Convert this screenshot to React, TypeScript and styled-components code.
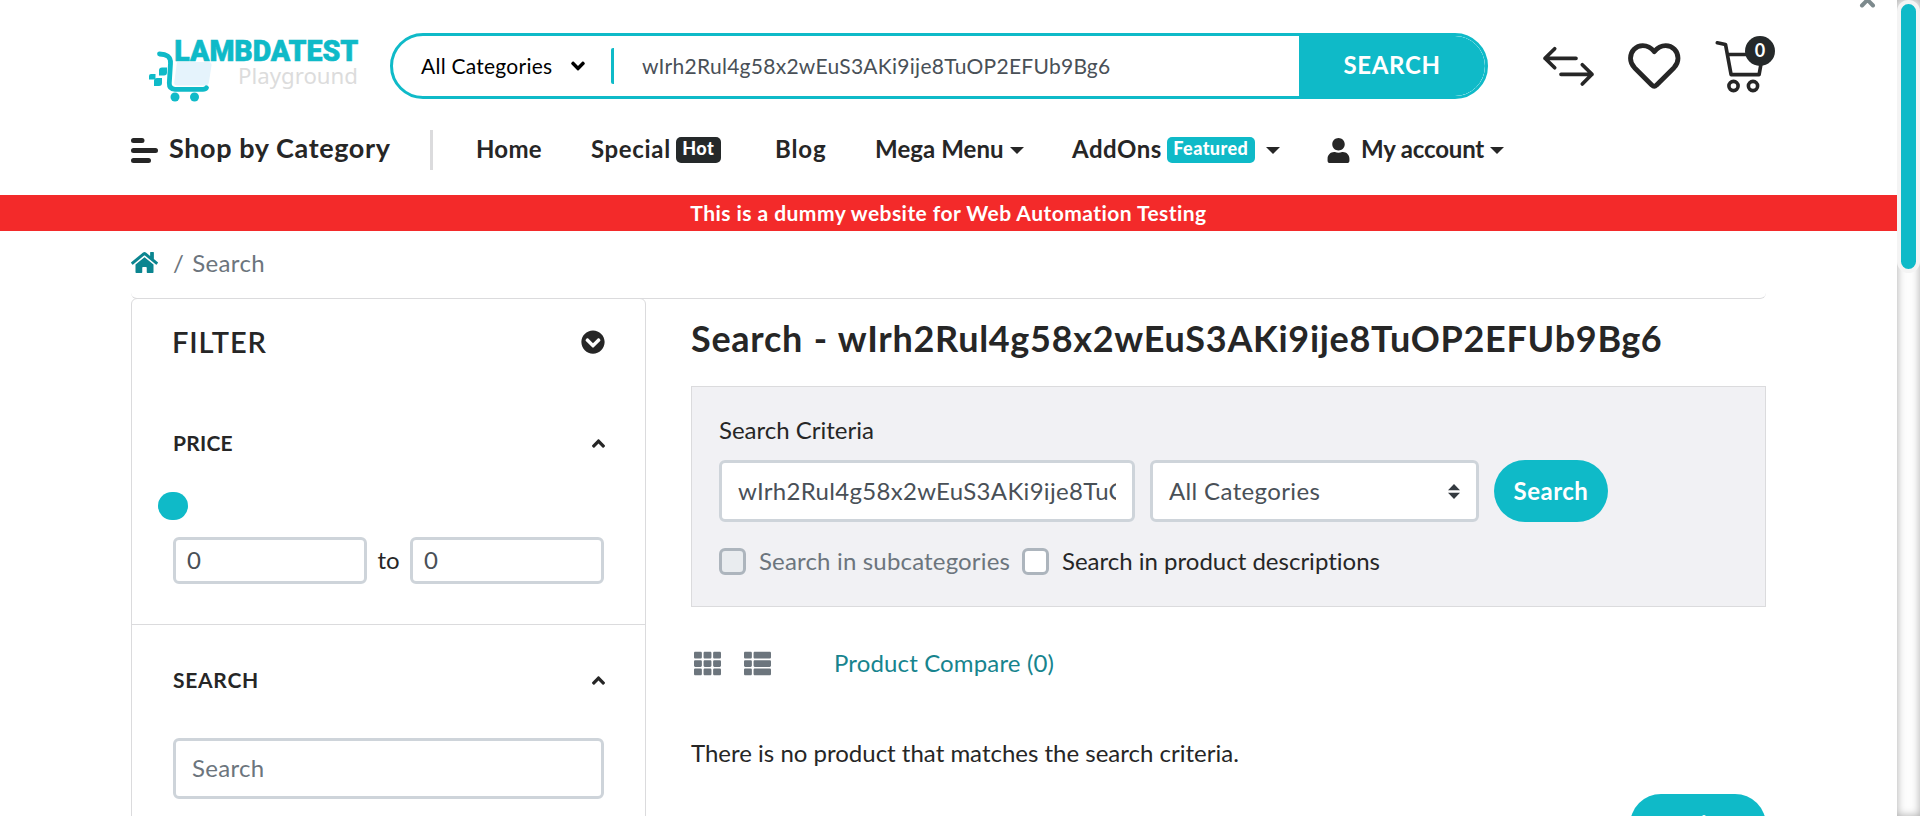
import React from 'react';
import styled, { createGlobalStyle } from 'styled-components';
import { FaAngleDown, FaAngleUp, FaChevronCircleDown, FaHome, FaTh, FaThList, FaUser } from 'react-icons/fa';

const teal = '#0fbac8';
const ink = '#262626';
const line = '#dbdbdd';
const query = 'wIrh2Rul4g58x2wEuS3AKi9ije8TuOP2EFUb9Bg6';

const GlobalStyle = createGlobalStyle`
  *, *::before, *::after { box-sizing: border-box; }
  body { margin: 0; background: #fff; overflow: hidden; font-variant-ligatures: none; }
  body, input, button { font-family: Lato, "Liberation Sans", sans-serif; font-size: 24px; color: ${ink}; }
  svg { display: block; flex: none; }
`;

const Window = styled.div`
  display: flex;
  width: 1920px;
  height: 816px;
  overflow: hidden;
  position: relative;
`;
const Main = styled.main`
  width: 1897px;
`;
const ScrollTrack = styled.div`
  width: 23px;
  height: 816px;
  background: #fdfdfd;
  box-shadow: inset 0 0 9px #aaa;
`;
const ScrollThumb = styled.div`
  width: 23px;
  height: 273px;
  border: 4px solid #f4f4f4;
  border-radius: 12px;
  background: ${teal};
`;
const PanelCaret = styled.svg`
  position: absolute;
  top: 0;
  left: 1858px;
`;

const TopRow = styled.div`
  display: flex;
  align-items: center;
  height: 130px;
  padding: 2px 0 0 148px;
`;
const LogoArt = styled.svg`
  margin-top: 6px;
`;
const SearchBar = styled.form`
  display: flex;
  width: 1098px;
  height: 66px;
  margin-left: 30px;
  border: 3px solid ${teal};
  border-radius: 33px;
  overflow: hidden;
`;
const CategoryPicker = styled.div`
  display: flex;
  align-items: center;
  justify-content: space-between;
  width: 218px;
  padding: 0 22px 0 28px;
  font-size: 21px;
  letter-spacing: 0.25px;
  color: #000;
  span { padding-bottom: 2px; }
`;
const Field = styled.input<{ $h: number; $w?: number; $pad: number }>`
  width: ${p => (p.$w ? p.$w + 'px' : '100%')};
  height: ${p => p.$h}px;
  padding: 0 ${p => p.$pad}px 2px;
  border: 3px solid #ced4da;
  border-radius: 6px;
  background: #fff;
  color: #495057;
  letter-spacing: 0.3px;
  outline: none;
  display: block;
  &::placeholder { color: #6c757d; opacity: 1; }
`;
const BarDivider = styled.i`
  width: 3px;
  height: 36px;
  margin-top: 12px;
  background: ${teal};
  border-radius: 2px 0 0 2px;
`;
const BarInput = styled.input`
  flex: 1;
  min-width: 0;
  border: 0;
  padding: 0 28px 2px;
  font-size: 21px;
  letter-spacing: 0.27px;
  color: #495057;
  outline: none;
`;
const BarButton = styled.button`
  width: 186px;
  height: 60px;
  border: 0;
  border-radius: 0 30px 30px 0;
  background: ${teal};
  color: #fff;
  font-weight: 700;
  letter-spacing: 0.66px;
  padding: 0 0 4px;
`;
const HeaderIcons = styled.div`
  display: flex;
  align-items: center;
  margin-left: 54px;
  gap: 33px;
`;
const CartBox = styled.div`
  position: relative;
  margin-top: 1px;
`;
const CartCount = styled.span`
  position: absolute;
  top: -4px;
  left: 31px;
  width: 30px;
  height: 30px;
  border-radius: 50%;
  background: #25292a;
  color: #fff;
  font-size: 18px;
  font-weight: 700;
  line-height: 28px;
  text-align: center;
`;

const NavRow = styled.nav`
  display: flex;
  align-items: center;
  height: 40px;
  margin-bottom: 25px;
  padding-left: 131px;
  font-weight: 700;
`;
const ShopLink = styled.a`
  display: flex;
  align-items: center;
  gap: 11px;
  width: 299px;
  font-size: 27px;
  letter-spacing: 0.6px;
  span { padding-bottom: 5px; }
`;
const NavDivider = styled.i`
  width: 3px;
  height: 40px;
  margin-right: 43px;
  background: ${line};
`;
const NavItem = styled.a<{ $w: number; $ls: number }>`
  display: flex;
  align-items: center;
  width: ${p => p.$w}px;
  white-space: nowrap;
  letter-spacing: ${p => p.$ls}px;
  > span { padding-bottom: 4px; }
`;
const Badge = styled.b<{ $teal?: boolean; $w: number }>`
  width: ${p => p.$w}px;
  height: 26px;
  margin-left: 5px;
  border-radius: 5px;
  background: ${p => (p.$teal ? teal : '#25292a')};
  color: #fff;
  font-size: 18px;
  line-height: 23px;
  text-align: center;
  letter-spacing: 0.4px;
`;
const Caret = styled.i<{ $gap?: number }>`
  margin-left: ${p => p.$gap ?? 6}px;
  margin-top: 1px;
  border: 7px solid transparent;
  border-top-color: ${ink};
  border-bottom: 0;
`;
const UserIcon = styled(FaUser)`
  margin: 0 10px 0 -1px;
`;

const Banner = styled.div`
  height: 36px;
  padding-top: 1px;
  background: #f32a2a;
  color: #fff;
  font-size: 21px;
  font-weight: 700;
  line-height: 34px;
  letter-spacing: 0.45px;
  text-align: center;
`;

const Container = styled.div`
  width: 1635px;
  margin-left: 131px;
`;
const Breadcrumb = styled.div`
  display: flex;
  align-items: center;
  height: 68px;
  padding-bottom: 4px;
  border-bottom: 1px solid ${line};
  border-radius: 6px;
  color: #6c757d;
  letter-spacing: 0.35px;
  svg { color: #0b8590; }
  i { font-style: normal; margin: 0 8px 0 15px; padding-bottom: 1px; }
`;
const Columns = styled.div`
  display: flex;
  align-items: flex-start;
  gap: 45px;
`;
const Sidebar = styled.aside`
  width: 515px;
  height: 560px;
  margin-top: -1px;
  border: 1px solid ${line};
  border-radius: 6px;
`;
const FilterHead = styled.div`
  display: flex;
  align-items: center;
  justify-content: space-between;
  height: 86px;
  padding: 0 40px 0 40px;
  font-size: 29px;
  font-weight: 600;
  letter-spacing: 0.9px;
  span { padding-bottom: 2px; }
`;
const FilterGroup = styled.section<{ $top: number }>`
  padding: ${p => p.$top}px 41px 40px;
  border-bottom: 1px solid ${line};
`;
const GroupTitle = styled.h3<{ $ls: number }>`
  display: flex;
  align-items: center;
  justify-content: space-between;
  height: 60px;
  margin: 0;
  font-size: 21px;
  font-weight: 700;
  letter-spacing: ${p => p.$ls}px;
  span { padding-bottom: 2px; }
  svg { margin-right: -5px; }
`;
const SliderHandle = styled.div`
  width: 30px;
  height: 28px;
  margin: 19px 0 17px -15px;
  border-radius: 14px;
  background: ${teal};
`;
const PriceRange = styled.div`
  display: flex;
  align-items: center;
  justify-content: space-between;
  span { padding-bottom: 3px; }
`;
const SearchSlot = styled.div`
  margin-top: 28px;
`;

const Content = styled.section`
  width: 1075px;
`;
const Title = styled.h1`
  margin: 17px 0 26px;
  font-size: 36px;
  line-height: 44px;
  font-weight: 700;
  letter-spacing: 0.7px;
  word-spacing: 1.3px;
  white-space: nowrap;
`;
const Criteria = styled.div`
  height: 221px;
  padding: 25px 27px 0;
  border: 1px solid ${line};
  background: #f1f1f4;
`;
const CriteriaLabel = styled.label`
  display: block;
  line-height: 36px;
`;
const CriteriaRow = styled.div`
  display: flex;
  gap: 15px;
  margin-top: 12px;
`;
const SelectBox = styled.div`
  display: flex;
  align-items: center;
  justify-content: space-between;
  width: 329px;
  height: 62px;
  padding: 0 16px 0 16px;
  border: 3px solid #ced4da;
  border-radius: 6px;
  background: #fff;
  color: #495057;
  letter-spacing: 0.36px;
  span { padding-bottom: 2px; }
`;
const Pill = styled.button<{ $w: number }>`
  width: ${p => p.$w}px;
  height: 62px;
  padding: 0 0 2px;
  border: 0;
  border-radius: 31px;
  background: ${teal};
  color: #fff;
  font-weight: 700;
  letter-spacing: 0.5px;
`;
const Checks = styled.div`
  display: flex;
  gap: 11px;
  margin-top: 21px;
`;
const Check = styled.label<{ $off?: boolean }>`
  display: flex;
  align-items: center;
  height: 37px;
  color: ${p => (p.$off ? '#6c757d' : ink)};
  letter-spacing: ${p => (p.$off ? 0.17 : 0)}px;
  i {
    width: 27px;
    height: 27px;
    margin-right: 13px;
    border: 3px solid #adb5bd;
    border-radius: 6px;
    background: ${p => (p.$off ? '#e9ecef' : '#fff')};
  }
  span { width: ${p => (p.$off ? '252px' : 'auto')}; padding-bottom: 3px; }
`;
const ViewBar = styled.div`
  display: flex;
  align-items: center;
  height: 40px;
  margin-top: 36px;
  padding-left: 3px;
  gap: 23px;
  color: #6c757d;
`;
const CompareLink = styled.a`
  margin-left: 40px;
  padding-bottom: 2px;
  color: #17848e;
  letter-spacing: 0.14px;
`;
const Empty = styled.p`
  margin: 52px 0 23px;
  line-height: 36px;
`;
const Actions = styled.div`
  display: flex;
  justify-content: flex-end;
`;

const Logo = () => (
  <LogoArt width="212" height="66" viewBox="148 36 212 66">
    <path d="M177 62h31.500q3.500 0 3 3.500l-2.500 16.500q-.6 3.500-4 3.500h-28q-3 0-2.800-3z" fill="#e5f3fc" />
    <path d="M159.500 54q5.500.3 8.500 2.300 2.900 2.200 2.500 7.200l-1.200 19.500q-.2 6.100 5.700 6.300h28q2.500 0 3.500-1.600" fill="none" stroke={teal} strokeWidth="4.800" strokeLinecap="round" strokeLinejoin="round" />
    <path d="M151 74h4.500v3.500q0 2-2 2h-4.500v-3.500q0-2 2-2zM162 67.500h5v5q0 3-3 3h-5v-5q0-3 3-3zM157 78h5v5q0 3-3 3h-5v-5q0-3 3-3z" fill={teal} />
    <circle cx="175" cy="97" r="4.500" fill={teal} />
    <circle cx="194.500" cy="97" r="4.500" fill={teal} />
    <text x="174.300" y="60.800" fontFamily="Roboto" fontWeight="900" fontSize="29" textLength="184" lengthAdjust="spacingAndGlyphs" fill={teal} stroke={teal} strokeWidth=".6">LAMBDATEST</text>
    <text x="238" y="84" fontFamily="Noto Sans" fontSize="22.400" textLength="120" lengthAdjust="spacingAndGlyphs" fill="#dcdcdc">Playground</text>
  </LogoArt>
);

const Compare = () => (
  <svg width="53" height="42" viewBox="1542 45 53 42" fill="none" stroke={ink} strokeWidth="3.700" strokeLinecap="round" strokeLinejoin="round">
    <path d="M1554.700 48.700L1545 58.300l9.700 9.500M1545 58.300h31M1582.300 64.700l9.700 9.600-9.700 9.700M1592 74.300h-31" />
  </svg>
);

const Heart = () => (
  <svg width="53" height="47" viewBox="0 0 53 47" fill="none" stroke={ink} strokeWidth="4.800" strokeLinejoin="round">
    <path d="M26.200 8.600C22.500 4 18.500 2.600 14.800 2.600 8 2.600 2.500 8 2.500 15.200c0 4 1.400 6.700 4 9.500L24 42.200q2.200 2.400 4.400 0L46 24.700c2.600-2.800 4-5.500 4-9.500C50 8 44.500 2.600 37.700 2.600c-3.700 0-7.700 1.400-11.500 6z" />
  </svg>
);

const Cart = () => (
  <svg width="50" height="54" viewBox="1714 39 50 54" fill="none" stroke={ink} strokeWidth="3.600" strokeLinecap="round" strokeLinejoin="round">
    <path d="M1717.300 41.800l8.200 1.600 5.600 30.200h28l3.600-20.100h-35" />
    <circle cx="1733.500" cy="85" r="4.600" />
    <circle cx="1753" cy="85" r="4.600" />
  </svg>
);

export default function App() {
  return (
    <Window>
      <GlobalStyle />
      <Main>
        <TopRow>
          <Logo />
          <SearchBar>
            <CategoryPicker><span>All Categories</span><FaAngleDown size={22} /></CategoryPicker>
            <BarDivider />
            <BarInput defaultValue={query} />
            <BarButton type="button">SEARCH</BarButton>
          </SearchBar>
          <HeaderIcons>
            <Compare />
            <Heart />
            <CartBox><Cart /><CartCount>0</CartCount></CartBox>
          </HeaderIcons>
        </TopRow>
        <NavRow>
          <ShopLink>
            <svg width="27" height="25" viewBox="0 0 27 25" stroke={ink} strokeWidth="5" strokeLinecap="round">
              <path d="M2.500 2.500H11M2.500 12.500H24.500M2.500 22.500H17.500" />
            </svg>
            <span>Shop by Category</span>
          </ShopLink>
          <NavDivider />
          <NavItem $w={115} $ls={0.25}><span>Home</span></NavItem>
          <NavItem $w={184} $ls={0.65}><span>Special</span><Badge $w={45}>Hot</Badge></NavItem>
          <NavItem $w={100} $ls={0.9}><span>Blog</span></NavItem>
          <NavItem $w={197} $ls={0.07}><span>Mega Menu</span><Caret /></NavItem>
          <NavItem $w={255} $ls={0.5}><span>AddOns</span><Badge $teal $w={88}>Featured</Badge><Caret $gap={11} /></NavItem>
          <NavItem $w={180} $ls={-0.17}><UserIcon size={25} /><span>My account</span><Caret /></NavItem>
        </NavRow>
        <Banner>This is a dummy website for Web Automation Testing</Banner>
        <Container>
          <Breadcrumb><FaHome size={27} /><i>/</i>Search</Breadcrumb>
          <Columns>
            <Sidebar>
              <FilterHead><span>FILTER</span><FaChevronCircleDown size={24} /></FilterHead>
              <FilterGroup $top={28}>
                <GroupTitle $ls={0.22}><span>PRICE</span><FaAngleUp size={21} /></GroupTitle>
                <SliderHandle />
                <PriceRange>
                  <Field $h={47} $w={194} $pad={11} defaultValue="0" />
                  <span>to</span>
                  <Field $h={47} $w={194} $pad={11} defaultValue="0" />
                </PriceRange>
              </FilterGroup>
              <FilterGroup $top={25}>
                <GroupTitle $ls={0.73}><span>SEARCH</span><FaAngleUp size={21} /></GroupTitle>
                <SearchSlot><Field $h={61} $pad={16} placeholder="Search" /></SearchSlot>
              </FilterGroup>
            </Sidebar>
            <Content>
              <Title>Search - {query}</Title>
              <Criteria>
                <CriteriaLabel>Search Criteria</CriteriaLabel>
                <CriteriaRow>
                  <Field $h={62} $w={416} $pad={16} defaultValue={query} />
                  <SelectBox>
                    <span>All Categories</span>
                    <svg width="12" height="15" viewBox="0 0 12 15" fill="#343a40"><path d="M6 0l6 6.200H0zM6 15l6-6.200H0z" /></svg>
                  </SelectBox>
                  <Pill $w={114}>Search</Pill>
                </CriteriaRow>
                <Checks>
                  <Check $off><i /><span>Search in subcategories</span></Check>
                  <Check><i /><span>Search in product descriptions</span></Check>
                </Checks>
              </Criteria>
              <ViewBar>
                <FaTh size={27} />
                <FaThList size={27} />
                <CompareLink>Product Compare (0)</CompareLink>
              </ViewBar>
              <Empty>There is no product that matches the search criteria.</Empty>
              <Actions><Pill $w={136}>Continue</Pill></Actions>
            </Content>
          </Columns>
        </Container>
      </Main>
      <ScrollTrack><ScrollThumb /></ScrollTrack>
      <PanelCaret width="18" height="9" viewBox="0 0 18 9" fill="none" stroke="#7d8a8d" strokeWidth="4" strokeLinecap="round">
        <path d="M4 5.500L9.500 -.2 15 5.500" />
      </PanelCaret>
    </Window>
  );
}
